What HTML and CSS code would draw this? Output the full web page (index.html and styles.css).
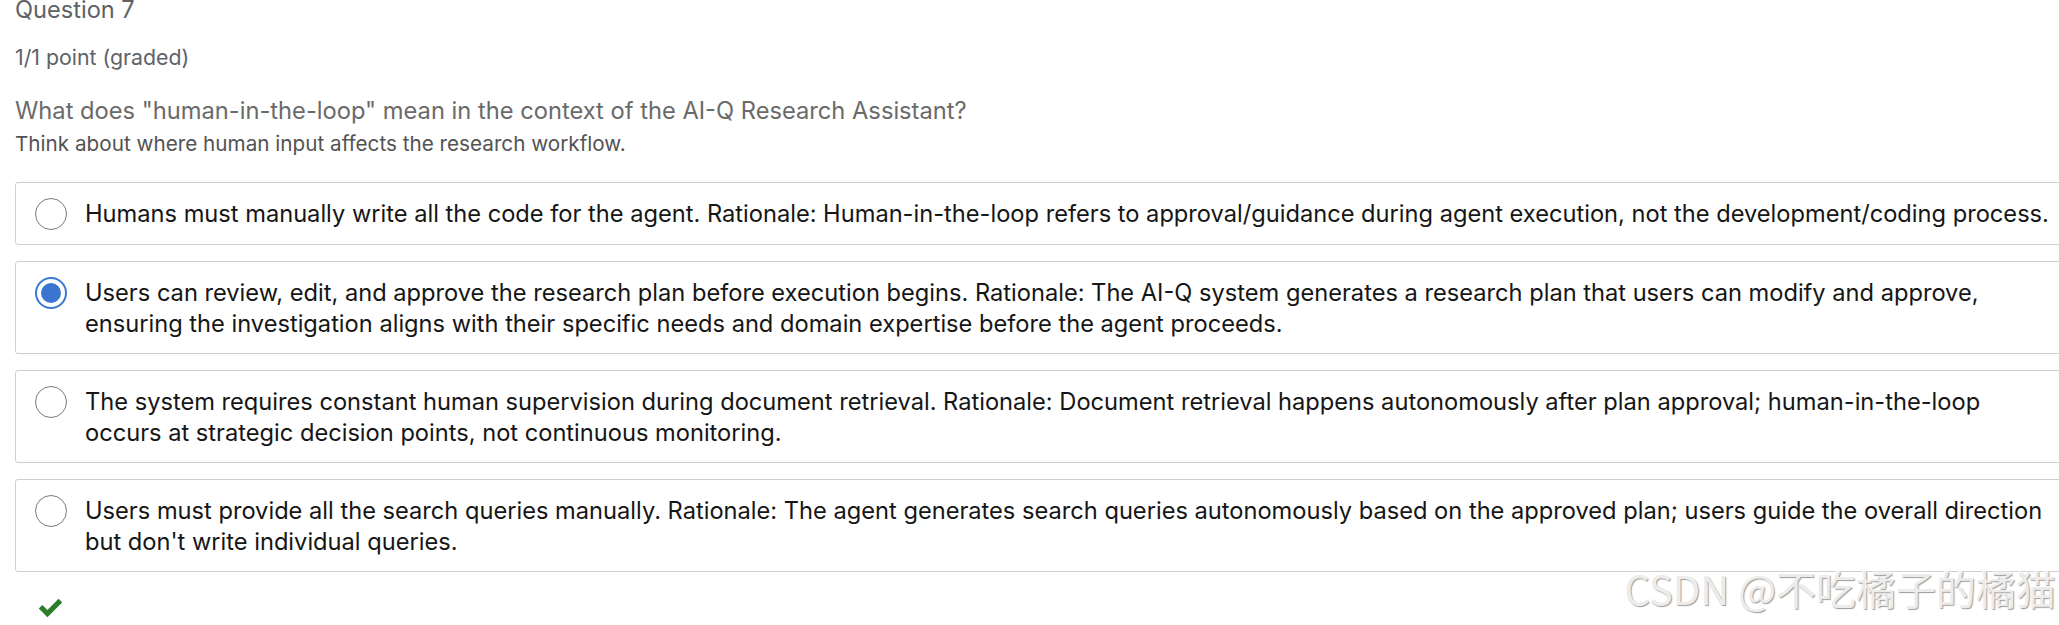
FILE: index.html
```html
<!DOCTYPE html>
<html lang="en">
<head>
<meta charset="utf-8">
<title>Question 7</title>
<link rel="stylesheet" href="styles.css">
</head>
<body>
<div class="quiz">
  <h3 class="q-title">Question 7</h3>
  <div class="q-points">1/1 point (graded)</div>
  <p class="q-text">What does "human-in-the-loop" mean in the context of the AI-Q Research Assistant?</p>
  <p class="q-hint">Think about where human input affects the research workflow.</p>

  <div class="options">
    <label class="option">
      <span class="radio"></span>
      <span class="opt-text">Humans must manually write all the code for the agent. Rationale: Human-in-the-loop refers to approval/guidance during agent execution, not the development/coding process.</span>
    </label>
    <label class="option">
      <span class="radio checked"></span>
      <span class="opt-text">Users can review, edit, and approve the research plan before execution begins. Rationale: The AI-Q system generates a research plan that users can modify and approve,<br>ensuring the investigation aligns with their specific needs and domain expertise before the agent proceeds.</span>
    </label>
    <label class="option">
      <span class="radio"></span>
      <span class="opt-text">The system requires constant human supervision during document retrieval. Rationale: Document retrieval happens autonomously after plan approval; human-in-the-loop<br>occurs at strategic decision points, not continuous monitoring.</span>
    </label>
    <label class="option">
      <span class="radio"></span>
      <span class="opt-text">Users must provide all the search queries manually. Rationale: The agent generates search queries autonomously based on the approved plan; users guide the overall direction<br>but don't write individual queries.</span>
    </label>
  </div>

  <div class="status">
    <svg class="check" width="25" height="20" viewBox="0 0 25 20" aria-hidden="true">
      <path d="M0.8 10.6 L4.4 7 L9.4 12 L20.6 0.8 L24.2 4.4 L9.4 19.2 Z" fill="#2e7b2c"/>
    </svg>
  </div>
</div>
<div class="watermark">CSDN @不吃橘子的橘猫</div>
</body>
</html>
```

FILE: styles.css
```css
html, body {
  margin: 0;
  padding: 0;
  background: #ffffff;
  overflow: hidden;
}

body {
  position: relative;
  width: 2059px;
  height: 625px;
  font-family: Inter, "Liberation Sans", sans-serif;
}

.quiz {
  padding-left: 15px;
}

.q-title {
  margin: 0;
  font-size: 23.6px;
  line-height: 20px;
  font-weight: 400;
  color: #5e6267;
}

.q-points {
  margin-top: 23px;
  font-size: 21.3px;
  line-height: 28px;
  color: #5e6267;
}

.q-text {
  margin: 25px 0 0 0;
  font-size: 23.7px;
  line-height: 30px;
  color: #6a6a6a;
}

.q-hint {
  margin: 4px 0 0 0;
  font-size: 20.7px;
  line-height: 28px;
  color: #535353;
}

.options {
  margin-top: 24px;
  width: 2075px;
  display: flex;
  flex-direction: column;
  gap: 16px;
}

.option {
  display: flex;
  align-items: flex-start;
  gap: 18px;
  border: 1px solid #cfcfcf;
  border-radius: 3px;
  padding: 15px 15px 14px 19px;
  font-size: 23.65px;
  line-height: 31px;
  color: #161616;
}

.radio {
  flex: 0 0 auto;
  box-sizing: border-box;
  width: 32px;
  height: 32px;
  border: 1.5px solid #7b7b7b;
  border-radius: 50%;
  background: #ffffff;
  position: relative;
}

.radio.checked {
  border: 2px solid #3a78d2;
}

.radio.checked::after {
  content: "";
  position: absolute;
  left: 4px;
  top: 4px;
  width: 20px;
  height: 20px;
  border-radius: 50%;
  background: #3a76d0;
}

.opt-text {
  flex: 1 1 auto;
}

.status {
  margin-top: 26px;
  padding-left: 23px;
  height: 20px;
}

.check {
  display: block;
}

.watermark {
  position: absolute;
  top: 568px;
  right: 3px;
  font-family: "Noto Sans CJK SC", "Liberation Sans", sans-serif;
  font-size: 40px;
  line-height: 40px;
  color: #ececec;
  text-shadow: 1px 1px 1px #9c9c9c, -1px -1px 0 #ffffff;
  white-space: nowrap;
}
```
